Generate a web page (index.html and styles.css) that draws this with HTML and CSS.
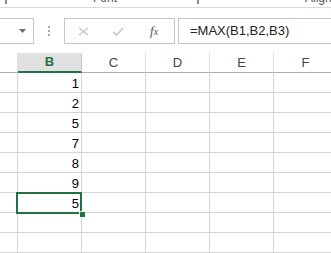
FILE: index.html
```html
<!DOCTYPE html>
<html lang="en">
<head>
  <meta charset="UTF-8">
  <title>Book1 - Excel</title>
  <link rel="stylesheet" href="styles.css">
</head>
<body>

  <div class="ribbon">
    <span class="group-icon"></span>
    <span class="group-sep"></span>
    <span class="group-name font-name">Font</span>
    <span class="group-icon right-icon"></span>
    <span class="group-sep"></span>
    <span class="group-name align-name">Alignment</span>
  </div>

  <div class="formula-bar">
    <div class="name-box">
      <svg width="7" height="4" viewBox="0 0 7 4"><path d="M0 0h7L3.5 4z" fill="#6d6d6d"/></svg>
    </div>
    <div class="grip"><i></i><i></i><i></i></div>
    <div class="fx-box">
      <svg class="fx-icon" width="11" height="9" viewBox="0 0 11 9"><path d="M1 1l9 7M10 1l-9 7" stroke="#c6c6c6" stroke-width="1.3" fill="none"/></svg>
      <svg class="fx-icon" width="12" height="9" viewBox="0 0 12 9"><path d="M1 5l3.5 3L11 1" stroke="#c6c6c6" stroke-width="1.6" fill="none"/></svg>
      <span class="fx">f<sub>x</sub></span>
    </div>
    <div class="formula">=MAX(B1,B2,B3)</div>
  </div>

  <div class="sheet">
    <div class="grid">
      <div class="corner"></div>
      <div class="col-head active">B</div>
      <div class="col-head">C</div>
      <div class="col-head">D</div>
      <div class="col-head">E</div>
      <div class="col-head">F</div>
    </div>
    <div class="grid rows" id="rows"></div>
    <div class="selection"><span class="handle"></span></div>
  </div>

<script>
  const values = [1, 2, 5, 7, 8, 9, 5, '', ''];
  const rows = document.querySelector('#rows');
  values.forEach(v => {
    rows.insertAdjacentHTML('beforeend',
      '<div class="row-head"></div><div class="cell num">' + v + '</div>' +
      '<div class="cell"></div><div class="cell"></div><div class="cell"></div><div class="cell"></div>');
  });
</script>
</body>
</html>
```

FILE: styles.css
```css
html {
  box-sizing: border-box;
  background: #fff;
  overflow: hidden;
}

*, *:before, *:after {
  box-sizing: inherit;
}

body {
  margin: 0;
  padding: 0;
  font-family: "Liberation Sans", Arial, sans-serif;
  color: #000;
  overflow: hidden;
  width: 331px;
  height: 253px;
}

.ribbon {
  height: 8px;
  border-bottom: 1px solid #dadbdc;
  display: flex;
  align-items: flex-end;
  overflow: hidden;
  position: relative;
}

.group-icon {
  width: 6px;
  height: 4px;
  margin-left: 5px;
  margin-bottom: 3px;
  border: 1px solid #8a8a8a;
  border-top: 0;
}

.group-sep {
  width: 1px;
  height: 7px;
  background: #d4d4d4;
  margin-left: 3px;
  align-self: flex-start;
}

.group-name {
  font-size: 12px;
  color: #555;
  line-height: 12px;
  margin-bottom: 3px;
}

.font-name {
  margin-left: 83px;
}

.right-icon {
  margin-left: 80px;
}

.align-name {
  margin-left: 103px;
}

.formula-bar {
  display: flex;
  align-items: stretch;
  height: 26px;
  margin-top: 10px;
}

.name-box {
  width: 35px;
  margin-left: -1px;
  border: 1px solid #c6c6c6;
  display: flex;
  align-items: center;
  justify-content: flex-end;
  padding-right: 7px;
}

.grip {
  width: 30px;
  display: flex;
  flex-direction: column;
  align-items: center;
  justify-content: center;
  gap: 2px;
}

.grip i {
  width: 2px;
  height: 2px;
  background: #a8a8a8;
}

.fx-box {
  width: 111px;
  border: 1px solid #c6c6c6;
  display: flex;
  align-items: center;
  padding-left: 13px;
  gap: 24px;
}

.fx-box .fx-icon + .fx-icon {
  margin-left: -1px;
}

.fx {
  font-family: "Liberation Serif", "Times New Roman", serif;
  font-style: italic;
  font-size: 13px;
  color: #555;
  margin-left: 2px;
}

.fx sub {
  font-size: 10px;
  vertical-align: 0;
}

.formula {
  flex: 1;
  margin-left: 3px;
  margin-right: -5px;
  border: 1px solid #c6c6c6;
  font-size: 13px;
  line-height: 24px;
  padding-left: 11px;
  color: #222;
}

.sheet {
  margin-top: 9px;
  position: relative;
}

.grid {
  display: grid;
  grid-template-columns: 18px repeat(5, 64px);
}

.corner {
  height: 20px;
  border-right: 1px solid #e1e1e1;
  border-bottom: 1px solid #ababab;
}

.col-head {
  height: 20px;
  border-right: 1px solid #dadada;
  border-bottom: 1px solid #ababab;
  font-size: 13px;
  color: #444;
  text-align: center;
  line-height: 19px;
}

.col-head.active {
  background: #e1e1e1;
  color: #217346;
  font-weight: bold;
  border-bottom: 2px solid #217346;
  border-right-color: #c6c6c6;
  line-height: 18px;
}

.row-head,
.cell {
  height: 20px;
  border-right: 1px solid #d4d4d4;
  border-bottom: 1px solid #d4d4d4;
}

.num {
  font-size: 13px;
  text-align: right;
  padding-right: 2px;
  line-height: 21px;
}

.selection {
  position: absolute;
  left: 16px;
  top: 139px;
  width: 66px;
  height: 22px;
  border: 2px solid #217346;
}

.handle {
  position: absolute;
  right: -5px;
  bottom: -5px;
  width: 6px;
  height: 6px;
  background: #217346;
  border: 1px solid #fff;
  border-right: 0;
  border-bottom: 0;
}
```
